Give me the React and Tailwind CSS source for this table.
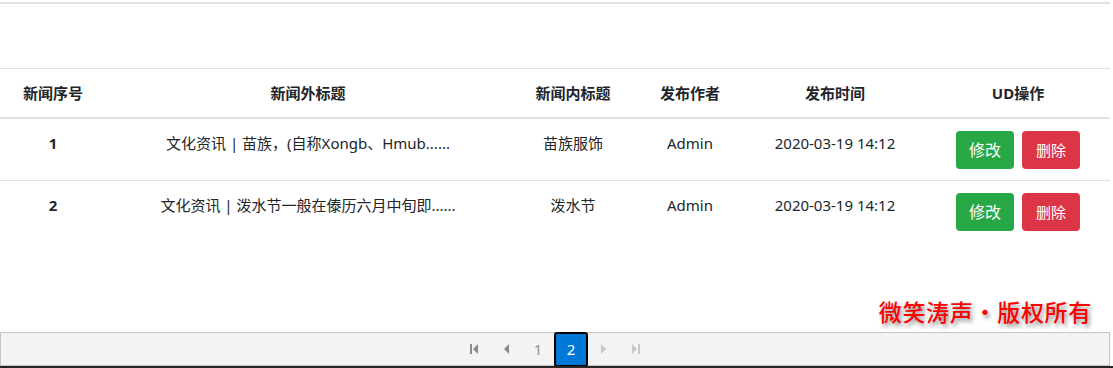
import React from "react";

const rows = [
  { id: 1, title: "文化资讯 | 苗族，(自称Xongb、Hmub......", inner: "苗族服饰", author: "Admin", time: "2020-03-19 14:12" },
  { id: 2, title: "文化资讯 | 泼水节一般在傣历六月中旬即......", inner: "泼水节", author: "Admin", time: "2020-03-19 14:12" },
];

function First({ c }) {
  return (
    <svg width="10" height="12" viewBox="0 0 10 12"><rect x="1" y="1" width="2" height="10" fill={c} /><path d="M9 1 L4 6 L9 11 Z" fill={c} /></svg>
  );
}
function Prev({ c }) {
  return (
    <svg width="8" height="12" viewBox="0 0 8 12"><path d="M7 1 L2 6 L7 11 Z" fill={c} /></svg>
  );
}
function Next({ c }) {
  return (
    <svg width="8" height="12" viewBox="0 0 8 12"><path d="M1 1 L6 6 L1 11 Z" fill={c} /></svg>
  );
}
function Last({ c }) {
  return (
    <svg width="10" height="12" viewBox="0 0 10 12"><path d="M1 1 L6 6 L1 11 Z" fill={c} /><rect x="7" y="1" width="2" height="10" fill={c} /></svg>
  );
}

export default function App() {
  const font = { fontFamily: '"Noto Sans", "Noto Sans CJK SC", sans-serif' };
  return (
    <div className="relative w-[1113px] h-[368px] bg-white text-[#212529] overflow-hidden" style={font}>
      <div className="w-[1110px] mt-[2px] border-t-2 border-[#dee2e6]" />
      <table className="w-[1110px] mt-[64px] border-collapse table-fixed">
        <colgroup>
          <col className="w-[106px]" />
          <col className="w-[404px]" />
          <col className="w-[126px]" />
          <col className="w-[108px]" />
          <col className="w-[182px]" />
          <col className="w-[184px]" />
        </colgroup>
        <thead>
          <tr className="border-t border-b-2 border-[#dee2e6]">
            {["新闻序号", "新闻外标题", "新闻内标题", "发布作者", "发布时间", "UD操作"].map((h) => (
              <th key={h} className="h-[49px] text-center align-middle text-[15px] font-bold leading-[22px] p-0">{h}</th>
            ))}
          </tr>
        </thead>
        <tbody>
          {rows.map((r, i) => (
            <tr key={r.id} className={i === 0 ? "border-b border-[#dee2e6]" : ""}>
              <td className="h-[63px] text-center align-top pt-[12px] text-[15px] font-bold leading-[24px]">{r.id}</td>
              <td className="text-center align-top pt-[12px] text-[15px] leading-[24px] whitespace-nowrap">{r.title}</td>
              <td className="text-center align-top pt-[12px] text-[15px] leading-[24px]">{r.inner}</td>
              <td className="text-center align-top pt-[12px] text-[15px] leading-[24px]">{r.author}</td>
              <td className="text-center align-top pt-[12px] text-[15px] leading-[24px]">{r.time}</td>
              <td className="text-center align-top pt-[12px]">
                <div className="flex justify-center gap-[8px]">
                  <button className="w-[58px] h-[38px] rounded-[4px] bg-[#28a745] text-white text-[16px] leading-[24px]">修改</button>
                  <button className="w-[58px] h-[38px] rounded-[4px] bg-[#dc3545] text-white text-[15px] leading-[24px]">删除</button>
                </div>
              </td>
            </tr>
          ))}
        </tbody>
      </table>

      <div
        className="absolute right-[21px] top-[296px] text-[23px] leading-[32px] text-[#ff0000] tracking-[0.7px] font-medium"
        style={{ textShadow: "2px 3px 4px rgba(0,0,0,0.45)" }}
      >
        微笑涛声・版权所有
      </div>

      <div className="absolute left-0 top-[332px] w-[1110px] h-[34px] bg-[#f3f3f3] border border-[#c4c4c4] flex items-center justify-center">
        <div className="flex items-center h-full">
          <span className="w-[32px] flex justify-center"><First c="#8a8a8a" /></span>
          <span className="w-[32px] flex justify-center"><Prev c="#8a8a8a" /></span>
          <span className="w-[32px] flex justify-center text-[14px] text-[#8a8a8a]">1</span>
          <span className="w-[34px] h-[35px] mt-[1px] rounded-[3px] border-2 border-black bg-[#0078d7] text-white text-[15px] flex items-center justify-center">2</span>
          <span className="w-[32px] flex justify-center"><Next c="#c8c8c8" /></span>
          <span className="w-[32px] flex justify-center"><Last c="#c8c8c8" /></span>
        </div>
      </div>
      <div className="absolute left-0 top-[366px] w-[1113px] h-[2px] bg-[#262626]" />
    </div>
  );
}
